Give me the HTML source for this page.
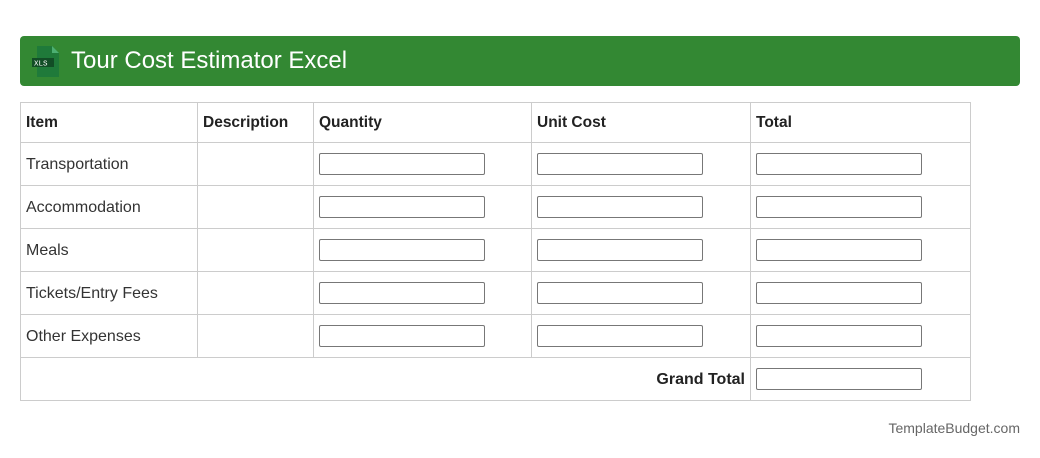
<!DOCTYPE html>
<html><head><style>
body{margin:0;background:#fff;font-family:"Liberation Sans",Arial,sans-serif;color:#333;width:1040px;height:458px;position:relative;overflow:hidden}
.hdr{position:absolute;left:20px;top:36px;width:1000px;height:50px;background:#338833;border-radius:4px}
.hdr h1{position:absolute;left:51px;top:0;margin:0;font-size:24px;font-weight:normal;line-height:50px;color:#fff}
.ic{position:absolute;left:12px;top:10px}
table{position:absolute;left:20px;top:102px;border-collapse:collapse;font-size:16px;table-layout:fixed}
td,th{border:1px solid #ccc;height:43px;padding:0 5px;text-align:left;box-sizing:border-box;vertical-align:middle}
td{padding-top:2px}
th{font-weight:bold;color:#222;font-size:15.5px;height:40px}
tr.h{height:40px}
.in{display:block;width:166px;height:22px;border:1px solid #777;border-radius:2px;box-sizing:border-box;margin-top:-2px}
.foot{position:absolute;right:20px;top:420px;font-size:14px;color:#666}
</style></head><body>
<div class="hdr">
<svg class="ic" width="28" height="31" viewBox="0 0 28 31"><path d="M5 0h15l7 7v24H5z" fill="#1f7a3a"/><path d="M20 0v7h7z" fill="#4caf72"/><rect x="0" y="12" width="22" height="9" fill="#124d26"/><text x="2" y="19.5" font-size="7.5" fill="#fff" font-family="Liberation Mono,monospace">XLS</text></svg>
<h1>Tour Cost Estimator Excel</h1></div>
<table>
<tr class="h"><th style="width:177px">Item</th><th style="width:116px">Description</th><th style="width:218px">Quantity</th><th style="width:219px">Unit Cost</th><th style="width:220px">Total</th></tr>
<tr><td>Transportation</td><td></td><td><span class="in"></span></td><td><span class="in"></span></td><td><span class="in"></span></td></tr>
<tr><td>Accommodation</td><td></td><td><span class="in"></span></td><td><span class="in"></span></td><td><span class="in"></span></td></tr>
<tr><td>Meals</td><td></td><td><span class="in"></span></td><td><span class="in"></span></td><td><span class="in"></span></td></tr>
<tr><td>Tickets/Entry Fees</td><td></td><td><span class="in"></span></td><td><span class="in"></span></td><td><span class="in"></span></td></tr>
<tr><td>Other Expenses</td><td></td><td><span class="in"></span></td><td><span class="in"></span></td><td><span class="in"></span></td></tr>
<tr><td colspan="4" style="text-align:right;font-weight:bold;color:#222">Grand Total</td><td><span class="in"></span></td></tr>
</table>
<div class="foot">TemplateBudget.com</div>
</body></html>
